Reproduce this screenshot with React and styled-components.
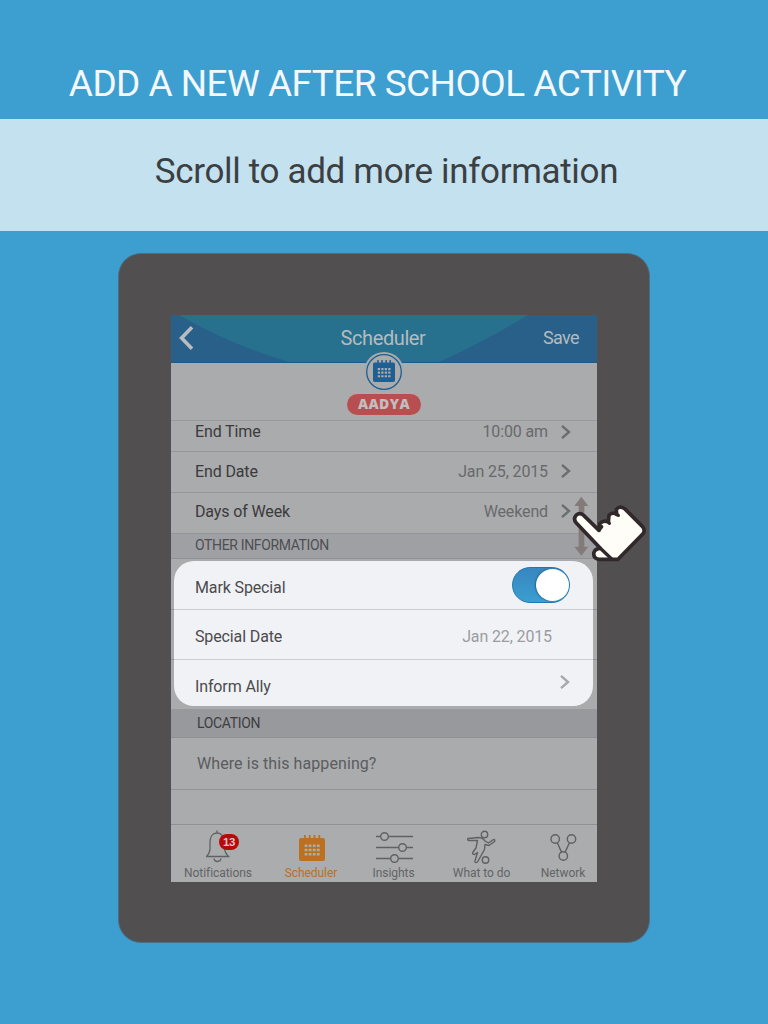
import React from 'react';
import styled, { createGlobalStyle } from 'styled-components';

const GlobalStyle = createGlobalStyle`
  * { box-sizing: border-box; }
  body { margin: 0; background: #3d9fd0; font-family: Roboto, "Liberation Sans", sans-serif; }
`;

const Page = styled.main`
  width: 768px;
  height: 1024px;
  background: #3d9fd0;
  display: flex;
  flex-direction: column;
  align-items: center;
  overflow: hidden;
`;

const Title = styled.h1`
  margin: 0;
  padding: 62px 13px 0 0;
  height: 119px;
  font-size: 37px;
  line-height: 44px;
  font-weight: 400;
  color: #f3f8fd;
  white-space: nowrap;
  letter-spacing: -0.55px;
`;

const SubtitleBand = styled.div`
  width: 100%;
  height: 112px;
  padding: 31px 0 0 5px;
  background: #c4e1ef;
  display: flex;
  justify-content: center;
  font-size: 35px;
  line-height: 44px;
  color: #3c3f42;
  white-space: nowrap;
  letter-spacing: -0.34px;
`;

const Tablet = styled.section`
  position: relative;
  width: 532px;
  height: 690px;
  margin-top: 22px;
  padding: 61px 53px 0 52px;
  border: 1px solid #4b7085;
  border-radius: 23px;
  background: #514f50;
`;

const Screen = styled.div`
  width: 426px;
  height: 567px;
  background: #a9abad;
  display: flex;
  flex-direction: column;
`;

const Header = styled.header`
  position: relative;
  height: 48px;
  flex: none;
  background: #286089;
  border-bottom: 1px solid #1c5b88;
  display: grid;
  grid-template-columns: 1fr auto 1fr;
  align-items: center;
  padding: 0 18px 2px 8px;
  color: #b6bbbf;
`;

const Wave = styled.svg`
  position: absolute;
  left: 0;
  top: 0;
`;

const HeaderTitle = styled.span`
  position: relative;
  font-size: 20px;
  letter-spacing: -0.4px;
  margin-right: -8px;
`;

const HeaderAction = styled.span`
  position: relative;
  justify-self: end;
  font-size: 18px;
  letter-spacing: -0.6px;
`;

const BackIcon = styled.svg`
  position: relative;
  display: block;
`;

const Profile = styled.div`
  height: 58px;
  flex: none;
  border-bottom: 1px solid #989a9d;
  display: flex;
  flex-direction: column;
  align-items: center;
`;

const Avatar = styled.svg`
  position: relative;
  flex: none;
  margin-top: -11px;
`;

const NamePill = styled.span`
  margin-top: 2px;
  width: 74px;
  height: 21px;
  border-radius: 11px;
  background: #b84e4f;
  color: #c2bdbe;
  font: 800 14px/20px "Open Sans", sans-serif;
  letter-spacing: 0.4px;
  text-align: center;
`;

const Row = styled.div`
  height: ${p => p.$h}px;
  flex: none;
  display: flex;
  align-items: center;
  padding: 0 26px ${p => p.$lift || 0}px 24px;
  border-bottom: 1px solid #949699;
  font-size: 16px;
  letter-spacing: -0.13px;
  color: #3b3a3c;
`;

const Value = styled.span`
  margin-left: auto;
  margin-right: ${p => (p.$alone ? 18 : 13)}px;
  color: ${p => (p.$alone ? '#9b9c9f' : '#69696b')};
`;

const SectionBar = styled.div`
  height: ${p => p.$h}px;
  flex: none;
  display: flex;
  align-items: center;
  padding: 0 0 ${p => p.$lift || 0}px ${p => p.$inset}px;
  border-bottom: 1px solid #8f9194;
  background: ${p => p.$tone};
  font-size: 14px;
  letter-spacing: ${p => p.$track || 0}px;
  color: ${p => p.$ink};
`;

const HighlightArea = styled.div`
  height: 150px;
  flex: none;
  padding: 2px 4px 3px 3px;
  background: linear-gradient(#909295, #909295) 0 50px / 100% 1px no-repeat,
    linear-gradient(#909295, #909295) 0 100px / 100% 1px no-repeat;
`;

const HighlightCard = styled.div`
  height: 145px;
  border-radius: 20px;
  background: #f1f2f6;
  overflow: hidden;
`;

const CardRow = styled.div`
  height: ${p => p.$h}px;
  display: flex;
  align-items: center;
  padding: ${p => p.$drop || 0}px 23px 0 21px;
  border-bottom: ${p => (p.$last ? 0 : 1)}px solid #cdced3;
  font-size: 16px;
  letter-spacing: -0.13px;
  color: #4b4b4e;
`;

const Push = styled.span`
  margin-left: auto;
  display: flex;
  padding-bottom: ${p => p.$lift || 0}px;
`;

const Switch = styled.span`
  width: 58px;
  height: 36px;
  padding: 1px 0;
  border-radius: 18px;
  border: 1px solid #1f78b4;
  background: linear-gradient(#3886bf, #3b9fd0);
  display: flex;
  justify-content: flex-end;
`;

const Knob = styled.span`
  width: 33px;
  height: 32px;
  border-radius: 50%;
  background: #fff;
  box-shadow: -1px 0 2px #22638f;
`;

const Placeholder = styled.div`
  height: 52px;
  flex: none;
  padding: 16px 0 0 26px;
  border-bottom: 1px solid #929497;
  font-size: 16px;
  line-height: 20px;
  letter-spacing: 0.08px;
  color: #5b5c5e;
`;

const Spacer = styled.div`
  flex: 1;
`;

const TabBar = styled.nav`
  height: 58px;
  flex: none;
  border-top: 1px solid #8f9194;
  background: #aaacad;
  display: flex;
`;

const Tab = styled.div`
  position: relative;
  width: ${p => p.$w}px;
  padding-top: 5px;
  display: flex;
  flex-direction: column;
  align-items: center;
  font-size: 12px;
  line-height: 14px;
  letter-spacing: -0.05px;
  white-space: nowrap;
  color: ${p => (p.$active ? '#bd701f' : '#636466')};
  svg { display: block; margin: 0 ${p => p.$nudge || 0}px 2px 0; }
`;

const Badge = styled.span`
  position: absolute;
  left: 48px;
  top: 9px;
  width: 20px;
  height: 16px;
  border-radius: 8px;
  background: #b90808;
  color: #d5c5c5;
  font: 700 11.5px/16px "Liberation Sans", sans-serif;
  letter-spacing: -0.4px;
  text-align: center;
`;

const Pointer = styled.svg`
  position: absolute;
  left: 449px;
  top: 238px;
`;

const Chevron = ({ light }) => (
  <svg width="10" height="14" viewBox="0 0 10 14" fill="none" stroke={light ? '#a7a8ab' : '#6c6d70'} strokeWidth="2.4">
    <path d="M1 .9 8 7 1 13.100" />
  </svg>
);

const Calendar = ({ fill, hole, x = 0, y = 0, size = 26 }) => (
  <svg x={x} y={y} width={size} height={size} viewBox="0 0 26 26">
    <path fill={fill} d="M2 3h3V.6a.9.9 0 0 1 1.8 0V3h3V.6a.9.9 0 0 1 1.8 0V3h3V.6a.9.9 0 0 1 1.8 0V3h3V.6a.9.9 0 0 1 1.8 0V3H24q2 0 2 2v19q0 2-2 2H2q-2 0-2-2V5q0-2 2-2Z" />
    {[9.5, 13.7, 17.9].map(cy =>
      [5.6, 9.7, 13.8, 17.9].map(cx => <rect key={`${cx}-${cy}`} x={cx} y={cy} width="2.8" height="2.6" rx=".5" fill={hole} />)
    )}
  </svg>
);

const BellIcon = () => (
  <svg width="24" height="34" viewBox="0 0 24 34" fill="none" stroke="#606163" strokeWidth="1.3">
    <path d="M11 3V.5M11 3C6.5 3 4 7 4 12v6c0 4-1 6-3.500 8.500h22C20 24 18.500 22 18.500 18v-6C18.500 7 15.500 3 11 3Z" />
    <path d="M8 28.500c.3 4 6.500 4 7 0" />
  </svg>
);

const SlidersIcon = () => (
  <svg width="37" height="34" viewBox="0 0 37 34" fill="none" stroke="#606163" strokeWidth="1.4">
    <path d="M0 6.500h4.500m8 0H37M0 17.500h22.500m8 0H37M0 28.500h14.500m8 0H37" />
    <circle cx="8.500" cy="6.500" r="3.800" />
    <circle cx="26.500" cy="17.500" r="3.800" />
    <circle cx="18.500" cy="28.500" r="3.800" />
  </svg>
);

const PlayIcon = () => (
  <svg width="29" height="34" viewBox="0 0 29 34" fill="none" stroke="#606163" strokeWidth="1.4" strokeLinejoin="round">
    <circle cx="17.500" cy="4.500" r="3.200" />
    <circle cx="18.500" cy="30" r="3.200" />
    <path d="M1 8.500 11 7.500Q15.500 7.500 18 11L21.500 13 26.500 9.500Q28.500 9.500 27.500 11.500L22 15.500 18 14.500 17.500 19.500 10.500 32Q8.500 33.500 7.800 31.500L10.500 22.500 7.500 24.500Q5 24.500 6 22L9 18 10.500 10.500 1.500 10.500Q0 9.500 1 8.500Z" />
  </svg>
);

const NetworkIcon = () => (
  <svg width="27" height="34" viewBox="0 0 27 34" fill="none" stroke="#606163" strokeWidth="1.4">
    <circle cx="5.200" cy="9" r="4.200" />
    <circle cx="21.500" cy="9" r="4.200" />
    <circle cx="13.300" cy="26" r="4.200" />
    <path d="m7.300 12.800 4.200 9.300M19.400 12.800l-4.200 9.300" />
  </svg>
);

export default function App() {
  return (
    <Page>
      <GlobalStyle />
      <Title>ADD A NEW AFTER SCHOOL ACTIVITY</Title>
      <SubtitleBand>Scroll to add more information</SubtitleBand>
      <Tablet>
        <Screen>
          <Header>
            <Wave width="426" height="47">
              <path fill="#27718f" d="M8 0Q60 30 118 47H268Q316 25 357 0Z" />
            </Wave>
            <BackIcon width="15" height="26" viewBox="0 0 15 26" fill="none" stroke="#b9bdc1" strokeWidth="3.6">
              <path d="M13 2.300 2.600 13 13 23.700" />
            </BackIcon>
            <HeaderTitle>Scheduler</HeaderTitle>
            <HeaderAction>Save</HeaderAction>
          </Header>
          <Profile>
            <Avatar width="40" height="40" viewBox="0 0 40 40">
              <circle cx="20" cy="20" r="20" fill="#a9abad" />
              <circle cx="20" cy="20" r="17.300" fill="none" stroke="#205f91" strokeWidth="1.300" />
              <Calendar x={9} y={8} size={22} fill="#205f91" hole="#a9abad" />
            </Avatar>
            <NamePill>AADYA</NamePill>
          </Profile>
          <Row $h={31} $lift={9}>End Time<Value>10:00 am</Value><Chevron /></Row>
          <Row $h={41} $lift={2}>End Date<Value>Jan 25, 2015</Value><Chevron /></Row>
          <Row $h={41} $lift={4}>Days of Week<Value>Weekend</Value><Chevron /></Row>
          <SectionBar $h={25} $inset={24} $lift={2} $track={-0.36} $tone="#9fa0a4" $ink="#4e4f52">OTHER INFORMATION</SectionBar>
          <HighlightArea>
            <HighlightCard>
              <CardRow $h={49} $drop={4}>
                Mark Special
                <Push $lift={4}><Switch><Knob /></Switch></Push>
              </CardRow>
              <CardRow $h={50} $drop={3}>Special Date<Value $alone>Jan 22, 2015</Value></CardRow>
              <CardRow $h={46} $drop={6} $last>
                Inform Ally
                <Push $lift={9}><Chevron light /></Push>
              </CardRow>
            </HighlightCard>
          </HighlightArea>
          <SectionBar $h={29} $inset={26} $track={-0.35} $tone="#98999d" $ink="#3d3e40">LOCATION</SectionBar>
          <Placeholder>Where is this happening?</Placeholder>
          <Spacer />
          <TabBar>
            <Tab $w={94}><BellIcon /><Badge>13</Badge>Notifications</Tab>
            <Tab $w={92} $active $nudge={-1}>
              <svg width="26" height="34" viewBox="0 0 26 34"><Calendar y={5} fill="#bd701f" hole="#aaacad" /></svg>
              Scheduler
            </Tab>
            <Tab $w={73} $nudge={-2}><SlidersIcon />Insights</Tab>
            <Tab $w={103} $nudge={1}><PlayIcon />What to do</Tab>
            <Tab $w={60}><NetworkIcon />Network</Tab>
          </TabBar>
        </Screen>
        <Pointer width="82" height="72" viewBox="505 228 246 216">
          <path fill="#837b7a" d="M545 242l21 28h-12v122h12l-21 27-21-27h13V270h-13Z" />
          <path fill="#fffdf8" stroke="#30282b" strokeWidth="11" strokeLinejoin="round" d="M552 298Q540 288 529 298 520 309 530 321L602 397Q585 398 582 412 582 430 600 430H655L730 353Q738 343 728 331L675 278Q660 268 650 280L651 295Q638 287 628 298L626 318Q612 311 601 322L598 343Z" />
          <path fill="none" stroke="#30282b" strokeWidth="10" strokeLinecap="round" d="M602 397 636 429M598 343 606 332M626 318 629 322M651 295 656 298" />
        </Pointer>
      </Tablet>
    </Page>
  );
}
